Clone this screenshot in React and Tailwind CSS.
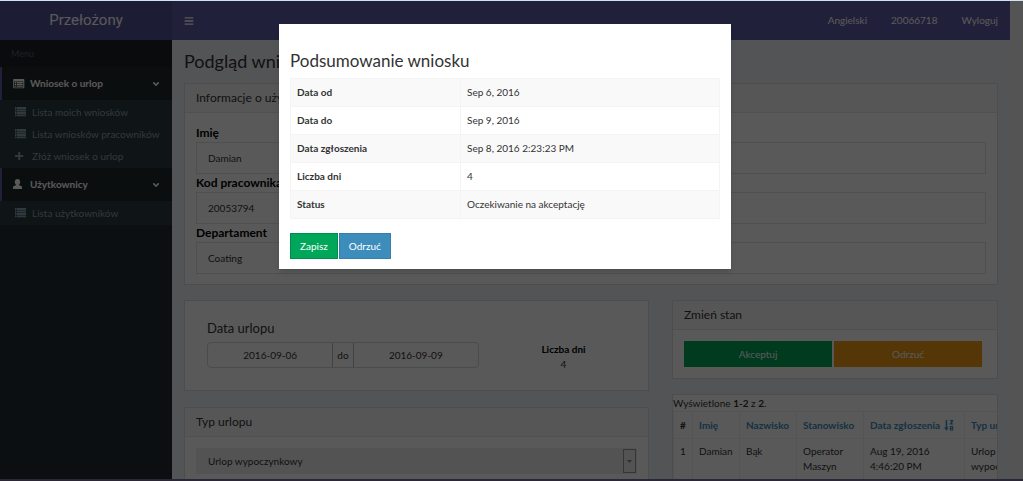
import { FaBars, FaAngleDown } from "react-icons/fa";

function ListIcon() {
  return (
    <svg viewBox="0 0 12 10" className="h-[10px] w-3 shrink-0" fill="currentColor" aria-hidden="true">
      <path d="M0 0h1.500v2H0zM2 0h9v2H2zM0 2.500h1.500v2H0zM2 2.500h9v2H2zM0 5h1.500v2H0zM2 5h9v2H2zM0 7.500h1.500v1.700H0zM2 7.500h9v1.700H2z" />
    </svg>
  );
}

function ListAltIcon() {
  return (
    <svg viewBox="0 0 12 10" className="h-[10px] w-3 shrink-0" fill="currentColor" aria-hidden="true">
      <path fillRule="evenodd" d="M1 0h9.500a.8.8 0 0 1 .8.800v7.700a.8.8 0 0 1-.8.800H1a.8.8 0 0 1-.8-.8V.800A.8.8 0 0 1 1 0zM1.200 2.400v6h9v-6z" />
      <path d="M1.800 2.900h1.400v1.300H1.800zM3.800 2.900h5.900v1.300H3.800zM1.800 4.700h1.400V6H1.800zM3.800 4.700h5.900V6H3.800zM1.800 6.500h1.400v1.300H1.800zM3.800 6.500h5.900v1.300H3.800z" />
    </svg>
  );
}

function PlusIcon() {
  return (
    <svg viewBox="0 0 12 10" className="h-[10px] w-3 shrink-0" fill="currentColor" aria-hidden="true">
      <path d="M3.200 1h2v2.900h3.100v2h-3.100V9h-2V5.900H.1v-2h3.100z" />
    </svg>
  );
}

function UserIcon() {
  return (
    <svg viewBox="0 0 12 11" className="h-[11px] w-3 shrink-0" fill="currentColor" aria-hidden="true">
      <path d="M4.500 0c1.700 0 2.700 1.200 2.700 2.800 0 1.200-.5 2.300-1.100 2.900v.5l2.100.8c.5.300.8.700.8 1.200v1.900H0V8.200c0-.5.3-.9.800-1.200l2.100-.8v-.5C2.300 5.100 1.800 4 1.800 2.800 1.800 1.200 2.800 0 4.500 0z" />
    </svg>
  );
}

function SortIcon() {
  return (
    <svg viewBox="0 0 10 11" className="h-[11px] w-[10px] shrink-0" fill="currentColor" aria-hidden="true">
      <path d="M1.700 0h1.500v7.500h1.600L2.450 10.800.1 7.500h1.600z" />
      <path d="M6 0h3.200v1L7.500 3.600h1.700v1H5.800v-1L7.500 1H6zM5.800 6h3.400v4.600H5.800zM6.900 7v.8h1.200V7zM6.900 8.800v.8h1.200v-.8z" fillRule="evenodd" />
    </svg>
  );
}

function MenuGroup({ icon, title, children }) {
  return (
    <li>
      <button type="button" className="flex h-[33px] w-full items-center border-l-2 border-[#605ca8] bg-[#1e282c] px-[11px] text-white">
        {icon}
        <span className="ml-[5px] font-bold">{title}</span>
        <FaAngleDown className="ml-auto size-[10px]" />
      </button>
      <ul className="bg-[#2c3b41] py-px text-[#8aa4af]">{children}</ul>
    </li>
  );
}

function MenuItem({ icon, children }) {
  return (
    <li>
      <a href="#" className="flex h-[22px] items-center gap-[5px] pl-[15px] whitespace-nowrap">
        {icon}
        <span>{children}</span>
      </a>
    </li>
  );
}

function Panel({ title, children, className = "" }) {
  return (
    <section className={`border border-[#ddd] bg-white ${className}`}>
      {title && <h2 className="h-[29px] border-b border-[#e4e4e4] bg-[#f5f5f5] px-[11px] text-xs leading-[28px]">{title}</h2>}
      {children}
    </section>
  );
}

function Field({ id, label, value }) {
  return (
    <div>
      <label htmlFor={id} className="block h-[18px] text-xs leading-[18px] font-bold text-black">{label}</label>
      <input id={id} readOnly defaultValue={value} className="block h-8 w-full border border-[#e2e2e2] bg-transparent px-[11px]" />
    </div>
  );
}

const fields = [
  ["name", "Imię", "Damian"],
  ["code", "Kod pracownika", "20053794"],
  ["department", "Departament", "Coating"],
];

const summary = [
  ["Data od", "Sep 6, 2016"],
  ["Data do", "Sep 9, 2016"],
  ["Data zgłoszenia", "Sep 8, 2016 2:23:23 PM"],
  ["Liczba dni", "4"],
  ["Status", "Oczekiwanie na akceptację"],
];

function Sidebar() {
  return (
    <aside className="w-[172px] shrink-0 bg-[#222d32]">
      <div className="h-[39px] bg-[#555299] text-center font-['Roboto',sans-serif] text-[15px] leading-[39px] text-white">Przełożony</div>
      <div className="h-[27px] bg-[#1a2226] pl-[11px] text-[9px] leading-[27px] text-[#4b646f]">Menu</div>
      <nav>
        <ul>
          <MenuGroup icon={<ListAltIcon />} title="Wniosek o urlop">
            <MenuItem icon={<ListIcon />}>Lista moich wniosków</MenuItem>
            <MenuItem icon={<ListIcon />}>Lista wniosków pracowników</MenuItem>
            <MenuItem icon={<PlusIcon />}>Złóż wniosek o urlop</MenuItem>
          </MenuGroup>
          <MenuGroup icon={<UserIcon />} title="Użytkownicy">
            <MenuItem icon={<ListIcon />}>Lista użytkowników</MenuItem>
          </MenuGroup>
        </ul>
      </nav>
    </aside>
  );
}

function RequestsTable() {
  const th = "border border-[#f0f0f0] px-[6px] text-left font-bold whitespace-nowrap";
  const td = "border border-[#f0f0f0] px-[6px] py-[5px] align-top";
  return (
    <Panel className="overflow-hidden">
      <p className="h-4 leading-4">Wyświetlone <b>1-2</b> z <b>2</b>.</p>
      <table className="w-[390px] table-fixed border-collapse leading-[15px]">
        <colgroup>
          <col className="w-[19px]" />
          <col className="w-[47px]" />
          <col className="w-[57px]" />
          <col className="w-[67px]" />
          <col className="w-[101px]" />
          <col />
        </colgroup>
        <thead>
          <tr className="h-[27px] text-[#3c8dbc]">
            <th className={`${th} text-[#333]`}>#</th>
            <th className={th}><a href="#">Imię</a></th>
            <th className={th}><a href="#">Nazwisko</a></th>
            <th className={th}><a href="#">Stanowisko</a></th>
            <th className={th}><a href="#" className="flex items-center gap-1">Data zgłoszenia <SortIcon /></a></th>
            <th className={th}><a href="#">Typ urlopu</a></th>
          </tr>
        </thead>
        <tbody>
          <tr>
            <td className={td}>1</td>
            <td className={td}>Damian</td>
            <td className={td}>Bąk</td>
            <td className={td}>Operator<br />Maszyn</td>
            <td className={td}>Aug 19, 2016<br />4:46:20 PM</td>
            <td className={td}>Urlop<br />wypoczynkowy</td>
          </tr>
        </tbody>
      </table>
    </Panel>
  );
}

function SummaryDialog() {
  return (
    <div className="absolute inset-0 flex items-start justify-center bg-black/65 pt-[23px] pr-[13px]">
      <div role="dialog" aria-labelledby="summary-title" className="w-[452px] bg-white px-[11px] pt-[25px] pb-[10px] shadow-md">
        <h2 id="summary-title" className="h-[29px] text-[17px] leading-6">Podsumowanie wniosku</h2>
        <table className="w-full border-collapse">
          <tbody>
            {summary.map(([label, value]) => (
              <tr key={label} className="h-7 odd:bg-[#f9f9f9]">
                <th scope="row" className="w-[170px] border border-[#f4f4f4] px-[6px] text-left font-bold">{label}</th>
                <td className="border border-[#f4f4f4] px-[6px]">{value}</td>
              </tr>
            ))}
          </tbody>
        </table>
        <div className="mt-[14px] flex gap-px text-white">
          <button type="button" className="h-[26px] border border-[#008d4c] bg-[#00a65a] px-[9px]">Zapisz</button>
          <button type="button" className="h-[26px] border border-[#367fa9] bg-[#3c8dbc] px-[9px]">Odrzuć</button>
        </div>
      </div>
    </div>
  );
}

export default function App() {
  return (
    <div className="relative flex h-screen overflow-hidden border-t border-b-2 border-t-[#cfe3f5] border-b-[#2b2736] bg-[#f0f0f0] pr-[13px] font-['Lato',sans-serif] text-[10px] text-[#333]">
      <Sidebar />
      <div className="min-w-0 flex-1 bg-[#ecf0f5]">
        <header className="flex h-[39px] items-center bg-[#605ca8] px-3 text-white">
          <button type="button" aria-label="Menu"><FaBars className="size-[10px]" /></button>
          <nav className="ml-auto flex gap-6">
            <a href="#">Angielski</a>
            <a href="#">20066718</a>
            <a href="#">Wyloguj</a>
          </nav>
        </header>
        <main className="px-3">
          <h1 className="h-[43px] text-lg leading-[43px]">Podgląd wniosku</h1>
          <Panel title="Informacje o użytkowniku">
            <div className="px-[11px] pt-[11px] pb-[10px]">
              {fields.map(([id, label, value]) => <Field key={id} id={id} label={label} value={value} />)}
            </div>
          </Panel>
          <div className="mt-[15px] grid grid-cols-[465fr_326fr] gap-x-[23px]">
            <div className="flex min-w-0 flex-col gap-4">
              <Panel>
                <div className="flex h-[89px] px-[22px] pt-[17px]">
                  <fieldset className="w-[272px] min-w-0 shrink-0">
                    <legend className="mb-1 h-5 text-[13px] leading-5">Data urlopu</legend>
                    <div className="flex h-[26px] rounded-sm border border-[#d2d6de] leading-6">
                      <input aria-label="Data od" readOnly defaultValue="2016-09-06" className="w-0 flex-1 text-center" />
                      <span className="border-x border-[#bbb] px-1">do</span>
                      <input aria-label="Data do" readOnly defaultValue="2016-09-09" className="w-0 flex-1 text-center" />
                    </div>
                  </fieldset>
                  <div className="flex-1 pt-6 pl-[22px] text-center leading-[15px]">
                    <b className="block text-black">Liczba dni</b>
                    4
                  </div>
                </div>
              </Panel>
              <Panel title="Typ urlopu">
                <div className="p-[11px]">
                  <div className="flex h-[26px] border border-[#eee] bg-[#eee]">
                    <select aria-label="Typ urlopu" className="min-w-0 flex-1 appearance-none px-[11px]">
                      <option>Urlop wypoczynkowy</option>
                    </select>
                    <span className="flex w-[13px] items-center justify-center border border-[#999]">
                      <svg viewBox="0 0 5 3" className="h-[3px] w-[5px]" fill="#888" aria-hidden="true"><path d="M0 0h5L2.500 3z" /></svg>
                    </span>
                  </div>
                </div>
              </Panel>
            </div>
            <div className="flex min-w-0 flex-col gap-[15px]">
              <Panel title="Zmień stan">
                <div className="grid grid-cols-2 gap-[2px] py-[11px] pr-[15px] pl-[11px] text-white">
                  <button type="button" className="h-[26px] bg-[#00a65a]">Akceptuj</button>
                  <button type="button" className="h-[26px] bg-[#f39c12]">Odrzuć</button>
                </div>
              </Panel>
              <RequestsTable />
            </div>
          </div>
        </main>
      </div>
      <SummaryDialog />
    </div>
  );
}
